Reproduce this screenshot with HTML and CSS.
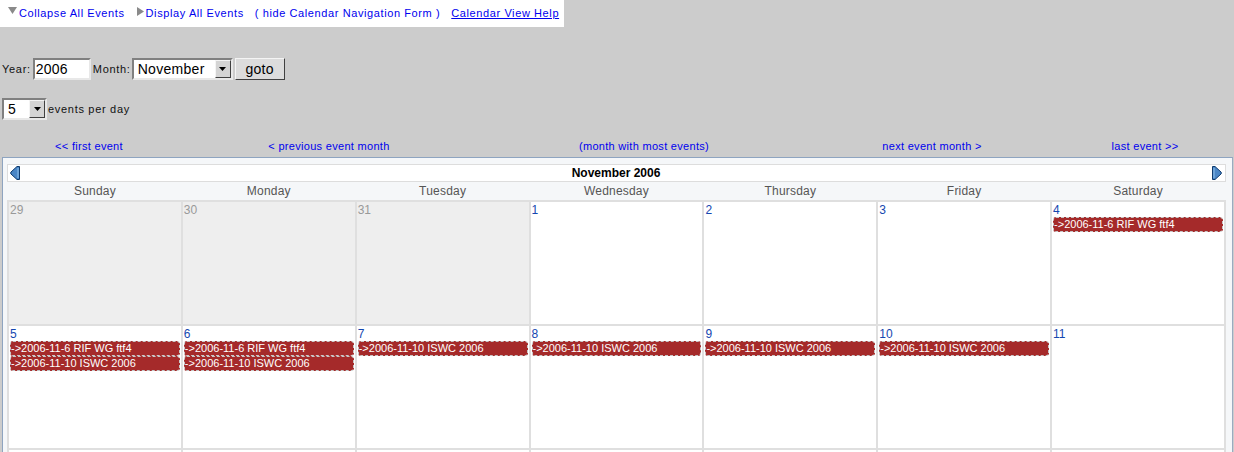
FILE: index.html
```html
<!DOCTYPE html>
<html>
<head>
<meta charset="utf-8">
<link rel="stylesheet" href="styles.css">
</head>
<body>
<div class="toolbar">
  <svg class="tri" width="9" height="7" viewBox="0 0 9 7"><path d="M0 0h9L4.5 7z" fill="#8a8a8a"/></svg><a class="lnk">Collapse All Events</a>
  <svg class="tri tri2" width="7" height="9" viewBox="0 0 7 9"><path d="M0 0v9L7 4.5z" fill="#8a8a8a"/></svg><a class="lnk">Display All Events</a>
  <a class="lnk hide">( hide Calendar Navigation Form )</a>
  <a class="lnk help">Calendar View Help</a>
</div>

<div class="form-row">
  <span class="lbl">Year:</span>
  <input class="year" type="text" value="2006">
  <span class="lbl">Month:</span>
  <span class="sel month"><span class="val">November</span><span class="arr"><svg width="7" height="4" viewBox="0 0 7 4"><path d="M0 0h7L3.5 4z" fill="#000"/></svg></span></span>
  <button class="goto">goto</button>
</div>

<div class="form-row perday">
  <span class="sel num"><span class="val">5</span><span class="arr"><svg width="7" height="4" viewBox="0 0 7 4"><path d="M0 0h7L3.5 4z" fill="#000"/></svg></span></span>
  <span class="lbl">events per day</span>
</div>

<div class="nav">
  <a>&lt;&lt; first event</a>
  <a>&lt; previous event month</a>
  <a>(month with most events)</a>
  <a>next event month &gt;</a>
  <a>last event &gt;&gt;</a>
</div>

<div class="cal">
  <div class="cal-head">
    <svg class="arrow" width="11" height="14" viewBox="0 0 11 14"><path d="M9.5 0.5 L9.5 13.5 L7 13.5 L1 8 Q0.3 7 1 6 L7 0.5 Z" fill="#4a86c6" stroke="#0d3a6e" stroke-width="1"/><path d="M8 2 L8 12" stroke="#8fc0ea" stroke-width="1"/></svg>
    <span class="title">November 2006</span>
    <svg class="arrow" width="11" height="14" viewBox="0 0 11 14"><path d="M1.5 0.5 L1.5 13.5 L4 13.5 L10 8 Q10.7 7 10 6 L4 0.5 Z" fill="#4a86c6" stroke="#0d3a6e" stroke-width="1"/><path d="M3 2 L3 12" stroke="#8fc0ea" stroke-width="1"/></svg>
  </div>
  <table class="grid">
    <thead>
      <tr><th>Sunday</th><th>Monday</th><th>Tuesday</th><th>Wednesday</th><th>Thursday</th><th>Friday</th><th>Saturday</th></tr>
    </thead>
    <tbody>
      <tr>
        <td class="other"><div class="dn">29</div></td>
        <td class="other"><div class="dn">30</div></td>
        <td class="other"><div class="dn">31</div></td>
        <td><div class="dn">1</div></td>
        <td><div class="dn">2</div></td>
        <td><div class="dn">3</div></td>
        <td><div class="dn">4</div><div class="ev">-&gt;2006-11-6 RIF WG ftf4</div></td>
      </tr>
      <tr>
        <td><div class="dn">5</div><div class="ev">-&gt;2006-11-6 RIF WG ftf4</div><div class="ev">-&gt;2006-11-10 ISWC 2006</div></td>
        <td><div class="dn">6</div><div class="ev">-&gt;2006-11-6 RIF WG ftf4</div><div class="ev">-&gt;2006-11-10 ISWC 2006</div></td>
        <td><div class="dn">7</div><div class="ev">-&gt;2006-11-10 ISWC 2006</div></td>
        <td><div class="dn">8</div><div class="ev">-&gt;2006-11-10 ISWC 2006</div></td>
        <td><div class="dn">9</div><div class="ev">-&gt;2006-11-10 ISWC 2006</div></td>
        <td><div class="dn">10</div><div class="ev">-&gt;2006-11-10 ISWC 2006</div></td>
        <td><div class="dn">11</div></td>
      </tr>
      <tr class="partial">
        <td></td><td></td><td></td><td></td><td></td><td></td><td></td>
      </tr>
    </tbody>
  </table>
</div>
</body>
</html>
```

FILE: styles.css
```css
html, body {
  margin: 0;
  padding: 0;
  background: #cccccc;
  font-family: "Liberation Sans", Arial, sans-serif;
  overflow: hidden;
  height: 452px;
}

.toolbar {
  display: inline-flex;
  align-items: center;
  background: #ffffff;
  height: 27px;
  padding: 0 5px 1px 8px;
  box-sizing: border-box;
  font-size: 11px;
  letter-spacing: 0.6px;
}
.tri {
  margin-right: 2px;
  position: relative;
  top: -3px;
}
.tri2 { margin-left: 12px; top: -2px; }
.lnk { color: #0000ee; }
.hide { margin-left: 11px; }
.help { margin-left: 11px; text-decoration: underline; }

.form-row {
  display: flex;
  align-items: center;
  margin-top: 31px;
  padding-left: 2px;
  height: 22px;
  font-size: 11px;
  letter-spacing: 0.7px;
}
.perday { margin-top: 18px; }
.lbl { color: #111; }
.year {
  box-sizing: border-box;
  width: 58px;
  height: 22px;
  margin: 0 2px 0 2px;
  border: 2px solid;
  border-color: #808080 #e8e8e8 #e8e8e8 #808080;
  padding: 1px 1px;
  font: 14px "Liberation Sans", Arial, sans-serif;
  letter-spacing: 0.2px;
  background: #fff;
}
.sel {
  box-sizing: border-box;
  display: inline-flex;
  align-items: center;
  height: 22px;
  background: #fff;
  border: 2px solid;
  border-color: #808080 #e8e8e8 #e8e8e8 #808080;
  font-size: 14px;
  letter-spacing: 0.3px;
  justify-content: space-between;
}
.sel .val { padding-left: 4px; }
.sel .arr {
  box-sizing: border-box;
  width: 16px;
  height: 18px;
  background: #d4d4d4;
  border: 1px solid;
  border-color: #f4f4f4 #404040 #404040 #f4f4f4;
  display: flex;
  align-items: center;
  justify-content: center;
}
.month { width: 101px; margin-left: 1px; }
.num { width: 45px; margin-right: 1px; }
.goto {
  box-sizing: border-box;
  height: 22px;
  width: 50px;
  margin-left: 2px;
  background: #dcdcdc;
  border: 1px solid;
  border-color: #f4f4f4 #404040 #404040 #f4f4f4;
  font: 14px "Liberation Sans", Arial, sans-serif;
  letter-spacing: 0.3px;
  padding: 0;
}

.nav {
  display: grid;
  grid-template-columns: 178px 302px 328px 248px 178px;
  margin-top: 17px;
  padding-top: 2px;
  height: 14px;
  line-height: 14px;
  font-size: 11px;
  letter-spacing: 0.3px;
  text-align: center;
}
.nav a { color: #0000ee; }

.cal {
  margin: 4px 1px 0 2px;
  border: 1px solid #8ea4c0;
  border-right-color: #9aaac0;
  background: #f5f7f9;
  padding: 6px 6px 0 4px;
  height: 300px;
}
.cal-head {
  box-sizing: border-box;
  height: 18px;
  background: #fff;
  border: 1px solid #dddddd;
  display: flex;
  align-items: center;
  justify-content: space-between;
  padding: 0 3px 0 2px;
}
.arrow { display: block; }
.title {
  font-weight: bold;
  font-size: 12px;
  color: #000;
}

.grid {
  width: 100%;
  table-layout: fixed;
  border-collapse: collapse;
}
.grid th {
  font-weight: normal;
  font-size: 12px;
  color: #555;
  height: 18px;
  padding: 0;
  letter-spacing: 0.2px;
}
.grid td {
  border: 2px solid #dfdfdf;
  background: #fff;
  vertical-align: top;
  height: 121px;
  padding: 1px 1px 0 0;
}
.grid td.other { background: #eeeeee; }
.grid tr.partial td { height: 20px; }
.dn {
  font-size: 12px;
  color: #1547b0;
  line-height: 14px;
  height: 14px;
  padding-left: 1px;
}
.other .dn { color: #999; }
.ev {
  box-sizing: border-box;
  background: #a52a2a;
  border: 1px dashed #c8c8c8;
  border-radius: 3px;
  color: #fff;
  font-size: 11px;
  line-height: 13px;
  height: 15px;
  white-space: nowrap;
  overflow: hidden;
  margin: 0 0 0 1px;
}
```
